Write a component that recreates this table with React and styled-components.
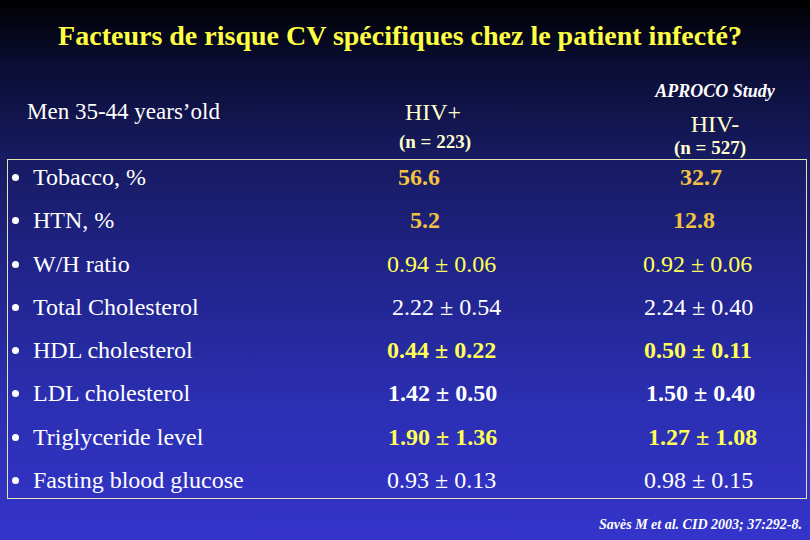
import React from 'react';
import styled, { createGlobalStyle } from 'styled-components';

const GlobalStyle = createGlobalStyle`
  html, body {
    margin: 0;
    padding: 0;
  }
  body {
    width: 810px;
    height: 540px;
    overflow: hidden;
    font-family: 'Liberation Serif', 'Times New Roman', serif;
  }
`;

const Slide = styled.div`
  width: 810px;
  height: 540px;
  box-sizing: border-box;
  padding-top: 20px;
  display: flex;
  flex-direction: column;
  background: linear-gradient(
    to bottom,
    #000000 0%,
    #0b0d33 12%,
    #161a5e 28%,
    #20248a 50%,
    #2b2fb2 75%,
    #3434cb 100%
  );
  color: #ffffff;
`;

const Title = styled.h1`
  margin: 0;
  padding-right: 10px;
  font-family: 'Liberation Serif', 'Times New Roman', serif;
  font-size: 28px;
  line-height: 32px;
  font-weight: bold;
  color: #ffff44;
  text-align: center;
`;

const Header = styled.div`
  margin-top: 18px;
  height: 89px;
  display: grid;
  grid-template-columns: 380px 106px 134px 190px;
  align-items: start;
`;

const HeadCell = styled.div`
  grid-column: ${(p) => p.$col};
  padding-top: ${(p) => p.$top}px;
  padding-left: ${(p) => p.$left || 0}px;
  display: flex;
  flex-direction: column;
  align-items: ${(p) => (p.$left ? 'flex-start' : 'center')};
`;

const AgeLabel = styled.div`
  font-size: 23px;
  line-height: 26px;
`;

const Study = styled.div`
  font-size: 18px;
  line-height: 22px;
  font-weight: bold;
  font-style: italic;
  margin-bottom: 9px;
`;

const Group = styled.div`
  font-size: 24px;
  line-height: 26px;
  color: #ffffcc;
`;

const Count = styled.div`
  font-size: 19px;
  line-height: 22px;
  font-weight: bold;
  color: #ffffcc;
  margin-top: ${(p) => p.$gap}px;
  margin-left: ${(p) => p.$shift || 0}px;
`;

const Table = styled.div`
  margin: 0 3px 0 7px;
  border: 1px solid #e4e4b0;
  display: grid;
  grid-template-columns: 379px 256px 1fr;
  grid-auto-rows: 35px;
  row-gap: 8.3px;
`;

const Label = styled.div`
  display: flex;
  align-items: center;
  gap: 14px;
  padding-left: 4px;
  font-size: 24px;
  line-height: 35px;
  white-space: nowrap;
`;

const Bullet = styled.span`
  width: 7px;
  height: 7px;
  border-radius: 50%;
  background: #ffffff;
  flex: none;
`;

const tones = {
  gold: '#f2c240',
  yellow: '#ffff55',
  white: '#ffffff',
};

const Value = styled.div`
  font-size: 24px;
  line-height: 35px;
  white-space: nowrap;
  padding-left: ${(p) => p.$indent}px;
  color: ${(p) => tones[p.$tone]};
  font-weight: ${(p) => (p.$bold ? 'bold' : 'normal')};
`;

const Source = styled.div`
  margin-top: 18px;
  padding-right: 8px;
  text-align: right;
  font-size: 14px;
  line-height: 16px;
  font-weight: bold;
  font-style: italic;
`;

const rows = [
  { label: 'Tobacco, %', tone: 'gold', bold: true, a: '56.6', ai: 11, b: '32.7', bi: 37 },
  { label: 'HTN, %', tone: 'gold', bold: true, a: '5.2', ai: 23, b: '12.8', bi: 30 },
  { label: 'W/H ratio', tone: 'yellow', a: '0.94 ± 0.06', ai: 0, b: '0.92 ± 0.06', bi: 0 },
  { label: 'Total Cholesterol', tone: 'white', a: '2.22 ± 0.54', ai: 5, b: '2.24 ± 0.40', bi: 1 },
  { label: 'HDL cholesterol', tone: 'yellow', bold: true, a: '0.44 ± 0.22', ai: 0, b: '0.50 ± 0.11', bi: 1 },
  { label: 'LDL cholesterol', tone: 'white', bold: true, a: '1.42 ± 0.50', ai: 1, b: '1.50 ± 0.40', bi: 3 },
  { label: 'Triglyceride level', tone: 'yellow', bold: true, a: '1.90 ± 1.36', ai: 1, b: '1.27 ± 1.08', bi: 5 },
  { label: 'Fasting blood glucose', tone: 'white', a: '0.93 ± 0.13', ai: 0, b: '0.98 ± 0.15', bi: 1 },
];

export default function App() {
  return (
    <>
      <GlobalStyle />
      <Slide>
        <Title>Facteurs de risque CV spécifiques chez le patient infecté?</Title>
        <Header>
          <HeadCell $col={1} $top={29} $left={27}>
            <AgeLabel>Men 35-44 years’old</AgeLabel>
          </HeadCell>
          <HeadCell $col={2} $top={29}>
            <Group>HIV+</Group>
            <Count $gap={6} $shift={4}>(n = 223)</Count>
          </HeadCell>
          <HeadCell $col={4} $top={10}>
            <Study>APROCO Study</Study>
            <Group>HIV-</Group>
            <Count $gap={0} $shift={-10}>(n = 527)</Count>
          </HeadCell>
        </Header>
        <Table>
          {rows.map((r) => (
            <React.Fragment key={r.label}>
              <Label>
                <Bullet />
                {r.label}
              </Label>
              <Value $tone={r.tone} $bold={r.bold} $indent={r.ai}>
                {r.a}
              </Value>
              <Value $tone={r.tone} $bold={r.bold} $indent={r.bi}>
                {r.b}
              </Value>
            </React.Fragment>
          ))}
        </Table>
        <Source>Savès M et al. CID 2003; 37:292-8.</Source>
      </Slide>
    </>
  );
}
